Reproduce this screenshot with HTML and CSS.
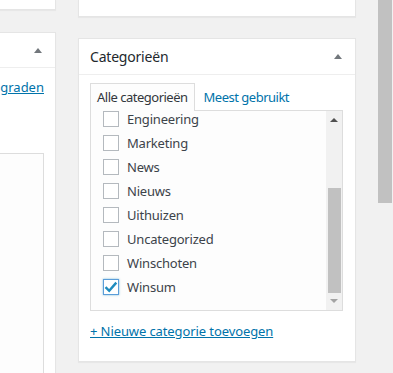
FILE: index.html
```html
<!DOCTYPE html>
<html>
<head>
  <meta charset="utf-8">
  <title>Categorieën</title>
  <link rel="stylesheet" href="styles.css">
</head>
<body>
  <div class="screen">
    <div class="col col-left">
      <div class="stub"></div>
      <div class="postbox postbox-left">
        <div class="postbox-head">
          <span class="toggle"></span>
        </div>
        <div class="postbox-body left-body">
          <a href="#" class="left-link">Upgraden</a>
          <div class="left-box"></div>
        </div>
      </div>
    </div>

    <div class="col col-right">
      <div class="stub stub-right"></div>
      <div class="postbox">
        <div class="postbox-head">
          <h2>Categorieën</h2>
          <span class="toggle"></span>
        </div>
        <div class="postbox-body">
          <ul class="tabs">
            <li class="tab active">Alle categorieën</li>
            <li class="tab"><a href="#">Meest gebruikt</a></li>
          </ul>
          <div class="cat-box">
            <ul class="cat-list">
              <li><span class="check"></span>Engineering</li>
              <li><span class="check"></span>Marketing</li>
              <li><span class="check"></span>News</li>
              <li><span class="check"></span>Nieuws</li>
              <li><span class="check"></span>Uithuizen</li>
              <li><span class="check"></span>Uncategorized</li>
              <li><span class="check"></span>Winschoten</li>
              <li><span class="check checked"><svg width="16" height="16" viewBox="0 0 16 16"><path d="M2.5 8.2 L6.2 11.8 L13.3 3.6" fill="none" stroke="#1e8cbe" stroke-width="2.4"/></svg></span>Winsum</li>
            </ul>
            <div class="box-scroll">
              <span class="arrow-up"></span>
              <div class="box-track"><div class="box-thumb"></div></div>
              <span class="arrow-down"></span>
            </div>
          </div>
          <a href="#" class="add-link">+ Nieuwe categorie toevoegen</a>
        </div>
      </div>
    </div>

    <div class="page-scroll">
      <div class="page-thumb"></div>
    </div>
  </div>
</body>
</html>
```

FILE: styles.css
```css
body {
  margin: 0;
  background-color: #f1f1f1;
  font-family: "Noto Sans", "Open Sans", sans-serif;
  font-size: 13px;
  color: #444;
  overflow: hidden;
}
.screen {
  display: flex;
  height: 373px;
  width: 393px;
  overflow: hidden;
}
.col {
  display: flex;
  flex-direction: column;
}
.col-left {
  width: 56px;
  margin-right: 22px;
}
.col-right {
  width: 278px;
}
.stub {
  height: 9px;
  background-color: #fff;
  border: 1px solid #e5e5e5;
  border-top: none;
  border-left: none;
  box-shadow: 0 1px 1px rgba(0, 0, 0, .04);
  margin-bottom: 22px;
}
.stub-right {
  height: 16px;
  border-left: 1px solid #e5e5e5;
  margin-bottom: 21px;
}
.postbox {
  background-color: #fff;
  border: 1px solid #e5e5e5;
  box-shadow: 0 1px 1px rgba(0, 0, 0, .04);
}
.postbox-left {
  flex: 1;
  display: flex;
  flex-direction: column;
  border-left: none;
  border-bottom: none;
  min-height: 0;
}
.postbox-head {
  height: 35px;
  border-bottom: 1px solid #eee;
  display: flex;
  align-items: center;
  justify-content: space-between;
  padding: 0 13px 0 11px;
}
.postbox-left .postbox-head {
  height: 34px;
  justify-content: flex-end;
}
.postbox-head h2 {
  margin: 0;
  font-size: 14px;
  font-weight: normal;
  color: #23282d;
  letter-spacing: -0.2px;
}
.toggle {
  width: 0;
  height: 0;
  border-left: 4px solid transparent;
  border-right: 4px solid transparent;
  border-bottom: 5px solid #72777c;
}
.postbox-body {
  padding: 8px 12px 20px 11px;
}
.left-body {
  flex: 1;
  min-height: 0;
  padding: 9px 11px 0 0;
  display: flex;
  flex-direction: column;
  align-items: flex-end;
}
.left-link {
  color: #0073aa;
  white-space: nowrap;
  line-height: 20px;
}
.left-box {
  margin-top: 56px;
  width: 60px;
  flex: 1;
  background-color: #fdfdfd;
  border: 1px solid #ddd;
  border-bottom: none;
}
.tabs {
  list-style: none;
  margin: 0;
  padding: 0;
  display: flex;
}
.tab {
  padding: 0 6px;
  height: 26px;
  line-height: 27px;
  border: 1px solid transparent;
  border-bottom: none;
  letter-spacing: -0.5px;
}
.tab.active {
  background-color: #fdfdfd;
  border-color: #ddd;
  color: #32373c;
  position: relative;
  margin-bottom: -1px;
  height: 27px;
}
.tab a {
  color: #0073aa;
  text-decoration: none;
  padding-left: 2px;
}
.cat-box {
  display: flex;
  height: 199px;
  border: 1px solid #ddd;
  background-color: #fdfdfd;
  overflow: hidden;
}
.cat-list {
  flex: 1;
  list-style: none;
  margin: -4px 0 0;
  padding: 0 0 0 12px;
}
.cat-list li {
  display: flex;
  align-items: center;
  height: 24px;
  margin: 0;
  color: #3c434a;
  letter-spacing: -0.2px;
}
.check {
  box-sizing: border-box;
  width: 16px;
  height: 16px;
  border: 1px solid #b4b9be;
  background-color: #fff;
  margin-right: 8px;
  position: relative;
}
.check svg {
  position: absolute;
  left: -1px;
  top: -1px;
}
.check.checked {
  border-color: #5b9dd9;
  box-shadow: 0 0 2px rgba(30, 140, 190, .6);
}
.box-scroll {
  width: 16px;
  background-color: #f1f1f1;
  display: flex;
  flex-direction: column;
  align-items: center;
}
.arrow-up, .arrow-down {
  width: 0;
  height: 0;
  border-left: 4px solid transparent;
  border-right: 4px solid transparent;
}
.arrow-up {
  margin: 7px 0 7px;
  border-bottom: 4px solid #505050;
}
.arrow-down {
  margin: 6px 0 7px;
  border-top: 4px solid #a3a3a3;
}
.box-track {
  flex: 1;
  width: 100%;
  display: flex;
  flex-direction: column;
  justify-content: flex-end;
}
.box-thumb {
  height: 105px;
  margin: 0 1px 0 2px;
  background-color: #c1c1c1;
}
.add-link {
  display: inline-block;
  margin-top: 10px;
  line-height: 20px;
  color: #0073aa;
  letter-spacing: -0.1px;
}
.page-scroll {
  margin-left: auto;
  width: 17px;
  background-color: #f1f1f1;
}
.page-thumb {
  height: 203px;
  margin: 0 1px 0 2px;
  background-color: #c1c1c1;
}
```
